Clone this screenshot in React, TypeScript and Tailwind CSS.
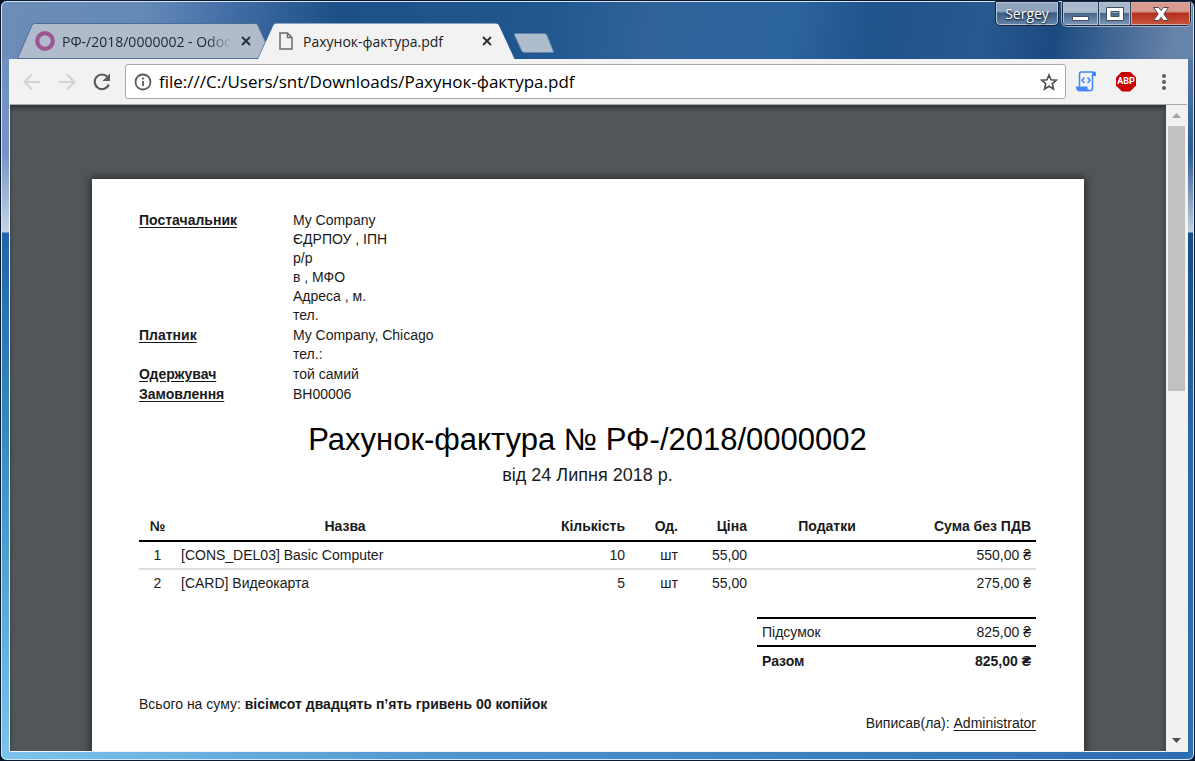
const chromeFont = "font-['Open_Sans','Noto_Sans',sans-serif]";

const parties = [
  { label: 'Постачальник', lines: ['My Company', 'ЄДРПОУ , ІПН', 'р/р', 'в , МФО', 'Адреса , м.', 'тел.'] },
  { label: 'Платник', lines: ['My Company, Chicago', 'тел.:'] },
  { label: 'Одержувач', lines: ['той самий'] },
  { label: 'Замовлення', lines: ['ВН00006'] },
];

const items = [
  { no: 1, name: '[CONS_DEL03] Basic Computer', qty: 10, unit: 'шт', price: '55,00', total: '550,00 ₴' },
  { no: 2, name: '[CARD] Видеокарта', qty: 5, unit: 'шт', price: '55,00', total: '275,00 ₴' },
];

function CloseIcon() {
  return (
    <svg width="10" height="10" viewBox="0 0 10 10" stroke="#2b2f33" strokeWidth="1.9">
      <path d="M1 1l8 8M9 1l-8 8" />
    </svg>
  );
}

function TitleBar() {
  return (
    <header className="relative flex h-[57px] items-end pl-2">
      <div className="flex items-end">
        <div className="relative flex h-9 w-[249px] items-center pl-[18px]">
          <svg className="absolute inset-0" width="249" height="36" viewBox="0 0 249 36">
            <path d="M.500 35.500L15 2Q15.800 .500 17.500 .500H238Q240 .500 240.800 2L248.500 19L241 35.500Z" fill="#b0bccb" stroke="#4a6d97" />
          </svg>
          <svg className="relative shrink-0" width="20" height="20" viewBox="0 0 20 20">
            <circle cx="10" cy="10" r="7.800" fill="none" stroke="#9c5793" strokeWidth="4.200" />
          </svg>
          <span className="relative ml-[7px] w-[170px] overflow-hidden whitespace-nowrap text-[14px] text-[#1c2733] [mask-image:linear-gradient(to_right,#000_85%,transparent)]">
            РФ-/2018/0000002 - Odoo
          </span>
          <button className="relative ml-[9px]" aria-label="Close tab">
            <CloseIcon />
          </button>
        </div>
        <div className="relative -ml-2 flex h-9 w-[257px] items-center pl-[21px]">
          <svg className="absolute inset-0" width="257" height="36" viewBox="0 0 257 36">
            <path d="M0 36L15.500 2Q16.300 .500 18 .500H238Q240 .500 240.800 2L256.500 36Z" fill="#f2f2f2" />
          </svg>
          <svg className="relative shrink-0" width="14" height="18" viewBox="0 0 14 18" fill="none" stroke="#6b6b6b" strokeWidth="1.500">
            <path d="M1 1H8.500L13 5.500V17H1ZM8.500 1V5.500H13" />
          </svg>
          <span className="relative ml-[10px] w-[173px] whitespace-nowrap text-[14px] text-[#222]">Рахунок-фактура.pdf</span>
          <button className="relative ml-[6px]" aria-label="Close tab">
            <CloseIcon />
          </button>
        </div>
        <button className="-ml-px mb-[6px]" aria-label="New tab">
          <svg width="40" height="20" viewBox="0 0 40 20">
            <path d="M1.500 .500H30.500Q32 .500 33 2.500L39.300 18Q39.800 19.500 38.500 19.500H10Q8.500 19.500 7.500 17.500L.500 2Q0 .500 1.500 .500Z" fill="#aebccd" stroke="#6385ac" />
          </svg>
        </button>
      </div>
      <div className="absolute -right-[3px] -top-px flex gap-[3px]">
        <button className="h-[25px] w-[64px] rounded-b-[5px] border border-[#16263c] bg-linear-to-b from-[#8fa4bd] from-40% via-[#3b5d88] via-50% to-[#6685aa] text-[14px] leading-6 text-white shadow-[inset_0_0_0_1px_#b5c3d4] [text-shadow:0_1px_2px_#000]">
          Sergey
        </button>
        <div className="flex h-[25px] overflow-hidden rounded-b-[5px] border border-[#16263c] shadow-[0_0_0_1px_#9cb0c8]">
          <button className="flex w-[35px] items-center justify-center bg-linear-to-b from-[#a9b8ca] from-45% via-[#49678e] via-50% to-[#7d97b6] shadow-[inset_0_0_0_1px_#b5c3d4]" aria-label="Minimize">
            <svg width="17" height="16" viewBox="0 0 17 16"><path d="M.500 10.500H16.500V14.500H.500Z" fill="#fff" stroke="#454e5c" /></svg>
          </button>
          <button className="flex w-[33px] items-center justify-center border-x border-[#2b3e59] bg-linear-to-b from-[#a9b8ca] from-45% via-[#49678e] via-50% to-[#7d97b6] shadow-[inset_0_0_0_1px_#b5c3d4]" aria-label="Maximize">
            <svg width="18" height="14" viewBox="0 0 18 14"><path d="M.500 .500H17.500V13.500H.500ZM5 4.500V9.500H13V4.500Z" fill="#fff" fillRule="evenodd" stroke="#454e5c" /></svg>
          </button>
          <button className="flex w-[59px] items-center justify-center bg-linear-to-b from-[#d99a90] from-40% via-[#b5301c] via-50% to-[#c9553d] shadow-[inset_0_0_0_1px_#dcaaa4]" aria-label="Close">
            <svg width="16" height="14" viewBox="0 0 16 14"><path d="M.500 .500H5.500L8 3.500L10.500 .500H15.500L10.800 7L15.500 13.500H10.500L8 10.500L5.500 13.500H.500L5.200 7Z" fill="#fff" stroke="#4f4650" /></svg>
          </button>
        </div>
      </div>
    </header>
  );
}

function Toolbar() {
  return (
    <nav className="flex h-[46px] items-center border-b border-[#a8a8a8] bg-[#f2f2f2] pl-3">
      <button aria-label="Back" disabled>
        <svg width="20" height="18" viewBox="0 0 20 18" fill="none" stroke="#d0d3d6" strokeWidth="2"><path d="M18 9H3M10 1.500L2.500 9L10 16.500" /></svg>
      </button>
      <button className="ml-[15px]" aria-label="Forward" disabled>
        <svg width="20" height="18" viewBox="0 0 20 18" fill="none" stroke="#d0d3d6" strokeWidth="2"><path d="M2 9H17M10 1.500L17.500 9L10 16.500" /></svg>
      </button>
      <button className="ml-[15px]" aria-label="Reload">
        <svg width="20" height="18" viewBox="0 0 20 18">
          <path d="M15.500 4A7.300 7.300 0 1 0 16.800 11.500" fill="none" stroke="#5a5d60" strokeWidth="2.200" />
          <path d="M18 .500V8H10.500Z" fill="#5a5d60" />
        </svg>
      </button>
      <div className="ml-[13px] flex h-[35px] min-w-0 flex-1 items-center rounded-[3px] border border-[#a9a9a9] bg-white pl-2 pr-[7px]">
        <svg className="shrink-0" width="18" height="18" viewBox="0 0 18 18" fill="none" stroke="#5a5a5a">
          <circle cx="9" cy="9" r="7.500" strokeWidth="1.800" />
          <path d="M9 8V13M9 4.500V6.500" strokeWidth="1.800" />
        </svg>
        <input
          aria-label="Address"
          className="ml-[7px] min-w-0 flex-1 bg-transparent text-[17px] text-black outline-none"
          defaultValue="file:///C:/Users/snt/Downloads/Рахунок-фактура.pdf"
        />
        <button aria-label="Bookmark">
          <svg width="18" height="18" viewBox="0 0 18 18" fill="none" stroke="#4f4f4f" strokeWidth="1.600">
            <path d="M9 2L11 6.800L16.300 7.200L12.300 10.700L13.500 16L9 13.200L4.500 16L5.700 10.700L1.700 7.200L7 6.800Z" />
          </svg>
        </button>
      </div>
      <button className="ml-[10px]" aria-label="Script">
        <svg width="20" height="21" viewBox="0 0 20 21" fill="none" stroke="#4285f4" strokeWidth="1.500">
          <path d="M3.500 15.500V3Q3.500 1 5.500 1H17.500M16.500 4V17.500Q16.500 19.500 14.500 19.500H3" />
          <path d="M16 5V2.500Q16 .500 18 .500Q20 .500 20 2.800V5Z" fill="#4285f4" stroke="none" />
          <path d="M0 15.500H11.500Q11 19 14 20.300H3Q0 20 0 15.500Z" fill="#4285f4" stroke="none" />
          <path d="M8.500 6.500L6 9.300L8.500 12M11.500 6.500L14 9.300L11.500 12" />
        </svg>
      </button>
      <button className="ml-5 flex size-5 items-center justify-center bg-[#c80000] font-['Roboto',sans-serif] text-[9px] font-bold text-white [clip-path:polygon(30%_0,70%_0,100%_30%,100%_70%,70%_100%,30%_100%,0_70%,0_30%)]">
        ABP
      </button>
      <button className="ml-[26px] mr-[21px]" aria-label="Menu">
        <svg width="4" height="18" viewBox="0 0 4 18" fill="#5a5d60">
          <circle cx="2" cy="3" r="2" />
          <circle cx="2" cy="9" r="2" />
          <circle cx="2" cy="15" r="2" />
        </svg>
      </button>
    </nav>
  );
}

function Invoice() {
  return (
    <article className="mx-auto mt-[74px] h-[1400px] w-[992px] max-w-full bg-white pl-[47px] pr-12 pt-8 font-['Liberation_Sans',Arial,sans-serif] text-[14px] leading-[19px] text-[#1a1a1a] shadow-[0_0_7px_2px_rgba(0,0,0,0.45)]">
      <dl className="grid grid-cols-[154px_1fr] gap-y-px">
        {parties.map(({ label, lines }) => (
          <div key={label} className="col-span-2 grid grid-cols-subgrid">
            <dt className="font-bold underline underline-offset-2">{label}</dt>
            <dd>
              {lines.map(line => (
                <p key={line}>{line}</p>
              ))}
            </dd>
          </div>
        ))}
      </dl>

      <h1 className="mt-4 text-center text-[31px] leading-10 text-black">Рахунок-фактура № РФ-/2018/0000002</h1>
      <p className="mt-[3px] text-center text-[18px] leading-6">від 24 Липня 2018 р.</p>

      <table className="mt-[25px] w-full table-fixed border-collapse">
        <colgroup>
          <col className="w-[37px]" />
          <col />
          <col className="w-[116px]" />
          <col className="w-[53px]" />
          <col className="w-[69px]" />
          <col className="w-[150px]" />
          <col className="w-[134px]" />
        </colgroup>
        <thead>
          <tr className="h-[29px] border-b-2 border-black">
            <th>№</th>
            <th>Назва</th>
            <th className="pr-[5px] text-right">Кількість</th>
            <th className="pr-[5px] text-right">Од.</th>
            <th className="pr-[5px] text-right">Ціна</th>
            <th>Податки</th>
            <th className="pr-[5px] text-right">Сума без ПДВ</th>
          </tr>
        </thead>
        <tbody>
          {items.map(item => (
            <tr key={item.no} className="h-[28px] border-b-2 border-[#ddd] last:border-b-0">
              <td className="text-center">{item.no}</td>
              <td className="pl-[5px]">{item.name}</td>
              <td className="pr-[5px] text-right">{item.qty}</td>
              <td className="pr-[5px] text-right">{item.unit}</td>
              <td className="pr-[5px] text-right">{item.price}</td>
              <td />
              <td className="pr-[5px] text-right">{item.total}</td>
            </tr>
          ))}
        </tbody>
      </table>

      <table className="ml-auto mt-5 w-[279px] border-collapse">
        <tbody>
          <tr className="h-[28px] border-y-2 border-black">
            <td className="pl-[5px]">Підсумок</td>
            <td className="pr-[5px] text-right">825,00 ₴</td>
          </tr>
          <tr className="h-[29px] font-bold">
            <td className="pl-[5px]">Разом</td>
            <td className="pr-[5px] text-right">825,00 ₴</td>
          </tr>
        </tbody>
      </table>

      <p className="mt-5">
        Всього на суму: <b>вісімсот двадцять п’ять гривень 00 копійок</b>
      </p>
      <p className="text-right">
        Виписав(ла): <span className="underline underline-offset-2">Administrator</span>
      </p>
    </article>
  );
}

function Scrollbar() {
  return (
    <div className="flex w-[21px] flex-col items-center bg-[#f1f1f1]">
      <button className="flex h-[21px] items-center" aria-label="Scroll up">
        <svg width="9" height="5" viewBox="0 0 9 5"><path d="M0 5L4.500 0L9 5Z" fill="#a3a3a3" /></svg>
      </button>
      <div className="h-[41%] w-[17px] bg-[#c1c1c1]" />
      <button className="mt-auto flex h-[21px] items-center" aria-label="Scroll down">
        <svg width="9" height="5" viewBox="0 0 9 5"><path d="M0 0L4.500 5L9 0Z" fill="#505050" /></svg>
      </button>
    </div>
  );
}

export default function App() {
  return (
    <div className="h-screen bg-[#071326]">
      <div className={`${chromeFont} relative flex h-full flex-col overflow-hidden rounded-[7px] border border-[#0b1a30] bg-[linear-gradient(90deg,#7dc4ec,#4a93cc_40%,#2c6cb0)]`}>
        <div className="absolute inset-y-0 left-0 w-2 bg-[linear-gradient(180deg,#7090ba,#7394c4_20%,#c4d5e6_231px,#2264a8_232px,#3a8ec2_60%,#7dc4ec)]" />
        <div className="absolute inset-y-0 right-0 w-2 bg-[linear-gradient(180deg,#6d8cb5,#2d5b92_20%,#c0d0e0_231px,#174d86_232px,#2a68ac_60%,#2f70b4)]" />
        <div className="absolute inset-x-0 top-0 h-[58px] bg-[linear-gradient(100deg,#6c8db7,#6489b8_12%,#3f6ba3_20%,#1d5088_28%,#20578f_45%,#2e6299_54%,#2c649f_66%,#1f538c_73%,#28598f_82%,#1b4a80_88%,#6683a8_98%)]" />
        <div className="relative flex min-h-0 flex-1 flex-col rounded-[6px] border border-[#d5e5f3] pb-[7px] pl-[7px] pr-[5px]">
          <TitleBar />
          <div className="flex min-h-0 flex-1 flex-col border border-t-0 border-[#f2f2f2]">
            <Toolbar />
            <main className="flex min-h-0 flex-1">
              <div className="min-w-0 flex-1 overflow-hidden bg-[#525659] shadow-[inset_0_3px_4px_rgba(0,0,0,0.4)]">
                <Invoice />
              </div>
              <Scrollbar />
            </main>
          </div>
        </div>
      </div>
    </div>
  );
}
